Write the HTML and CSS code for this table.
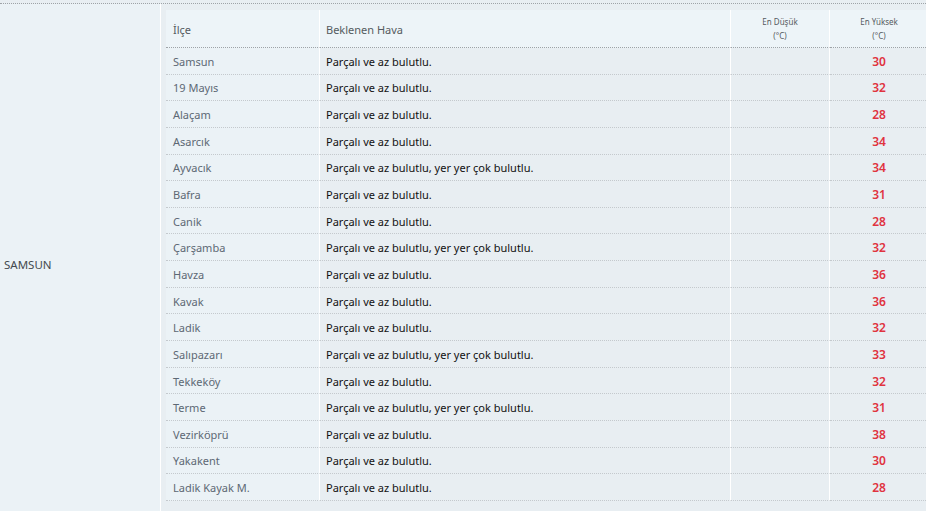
FILE: index.html
```html
<!DOCTYPE html>
<html lang="tr">
<head>
<meta charset="utf-8">
<title>Samsun</title>
<link rel="stylesheet" href="styles.css">
</head>
<body>
<div class="region">
  <div class="province">SAMSUN</div>
  <div class="detail">
    <table class="forecast">
      <colgroup>
        <col class="w-name"><col class="w-desc"><col class="w-low"><col class="w-high">
      </colgroup>
      <thead>
        <tr>
          <th class="h-name">İlçe</th>
          <th class="h-desc">Beklenen Hava</th>
          <th class="h-num">En Düşük<br>(°C)</th>
          <th class="h-num last">En Yüksek<br>(°C)</th>
        </tr>
      </thead>
      <tbody>
        <tr><td class="name">Samsun</td><td class="desc">Parçalı ve az bulutlu.</td><td class="low"></td><td class="high">30</td></tr>
        <tr><td class="name">19 Mayıs</td><td class="desc">Parçalı ve az bulutlu.</td><td class="low"></td><td class="high">32</td></tr>
        <tr><td class="name">Alaçam</td><td class="desc">Parçalı ve az bulutlu.</td><td class="low"></td><td class="high">28</td></tr>
        <tr><td class="name">Asarcık</td><td class="desc">Parçalı ve az bulutlu.</td><td class="low"></td><td class="high">34</td></tr>
        <tr><td class="name">Ayvacık</td><td class="desc">Parçalı ve az bulutlu, yer yer çok bulutlu.</td><td class="low"></td><td class="high">34</td></tr>
        <tr><td class="name">Bafra</td><td class="desc">Parçalı ve az bulutlu.</td><td class="low"></td><td class="high">31</td></tr>
        <tr><td class="name">Canik</td><td class="desc">Parçalı ve az bulutlu.</td><td class="low"></td><td class="high">28</td></tr>
        <tr><td class="name">Çarşamba</td><td class="desc">Parçalı ve az bulutlu, yer yer çok bulutlu.</td><td class="low"></td><td class="high">32</td></tr>
        <tr><td class="name">Havza</td><td class="desc">Parçalı ve az bulutlu.</td><td class="low"></td><td class="high">36</td></tr>
        <tr><td class="name">Kavak</td><td class="desc">Parçalı ve az bulutlu.</td><td class="low"></td><td class="high">36</td></tr>
        <tr><td class="name">Ladik</td><td class="desc">Parçalı ve az bulutlu.</td><td class="low"></td><td class="high">32</td></tr>
        <tr><td class="name">Salıpazarı</td><td class="desc">Parçalı ve az bulutlu, yer yer çok bulutlu.</td><td class="low"></td><td class="high">33</td></tr>
        <tr><td class="name">Tekkeköy</td><td class="desc">Parçalı ve az bulutlu.</td><td class="low"></td><td class="high">32</td></tr>
        <tr><td class="name">Terme</td><td class="desc">Parçalı ve az bulutlu, yer yer çok bulutlu.</td><td class="low"></td><td class="high">31</td></tr>
        <tr><td class="name">Vezirköprü</td><td class="desc">Parçalı ve az bulutlu.</td><td class="low"></td><td class="high">38</td></tr>
        <tr><td class="name">Yakakent</td><td class="desc">Parçalı ve az bulutlu.</td><td class="low"></td><td class="high">30</td></tr>
        <tr><td class="name">Ladik Kayak M.</td><td class="desc">Parçalı ve az bulutlu.</td><td class="low"></td><td class="high">28</td></tr>
      </tbody>
    </table>
  </div>
</div>
</body>
</html>
```

FILE: styles.css
```css
html, body {
  margin: 0;
  padding: 0;
  overflow: hidden;
}

body {
  width: 926px;
  height: 511px;
  background: #e8eef2;
  font-family: "Noto Sans", "Open Sans", sans-serif;
  font-size: 11px;
  color: #222;
}

.region {
  display: flex;
  margin-top: 3px;
  border-top: 1px dotted #9ea3a7;
}

.province {
  flex: 0 0 161px;
  box-sizing: border-box;
  display: flex;
  align-items: center;
  padding-left: 4px;
  padding-top: 1px;
  background: #ebf2f6;
  border-right: 1px solid #ffffff;
  color: #444a50;
  font-size: 11.5px;
}

.detail {
  flex: 1 1 auto;
  padding: 6px 0 23px 5px;
  min-width: 0;
}

.forecast {
  table-layout: fixed;
  border-collapse: separate;
  border-spacing: 0;
  width: 762px;
}

.w-name { width: 154px; }
.w-desc { width: 411px; }
.w-low { width: 99px; }
.w-high { width: 98px; }

.forecast th {
  height: 36px;
  padding: 1px 0 0 0;
  background: #edf4f8;
  border-bottom: 1px dotted #9ea3a7;
  border-right: 1px solid #ffffff;
  font-weight: normal;
  color: #555b60;
  vertical-align: middle;
}

.forecast th.last,
.forecast td.high {
  border-right: none;
}

.forecast th.h-name,
.forecast th.h-desc {
  text-align: left;
  font-size: 11px;
}

.forecast th.h-name { padding-left: 7px; }
.forecast th.h-desc { padding-left: 6px; }

.h-num {
  text-align: center;
  font-size: 8px;
  line-height: 14px;
}

.forecast td {
  height: 24.65px;
  padding: 1px 0 0 0;
  border-bottom: 1px dotted #c4c9cd;
  border-right: 1px solid #ffffff;
  background: #e8eef2;
  vertical-align: middle;
  white-space: nowrap;
}

.forecast td.name {
  padding-left: 7px;
  background: #ebf2f6;
  color: #5d6874;
}

.forecast td.desc {
  padding-left: 6px;
  color: #111;
}

.forecast td.high {
  text-align: center;
  color: #e0333f;
  font-weight: 600;
  font-size: 12px;
}
```
